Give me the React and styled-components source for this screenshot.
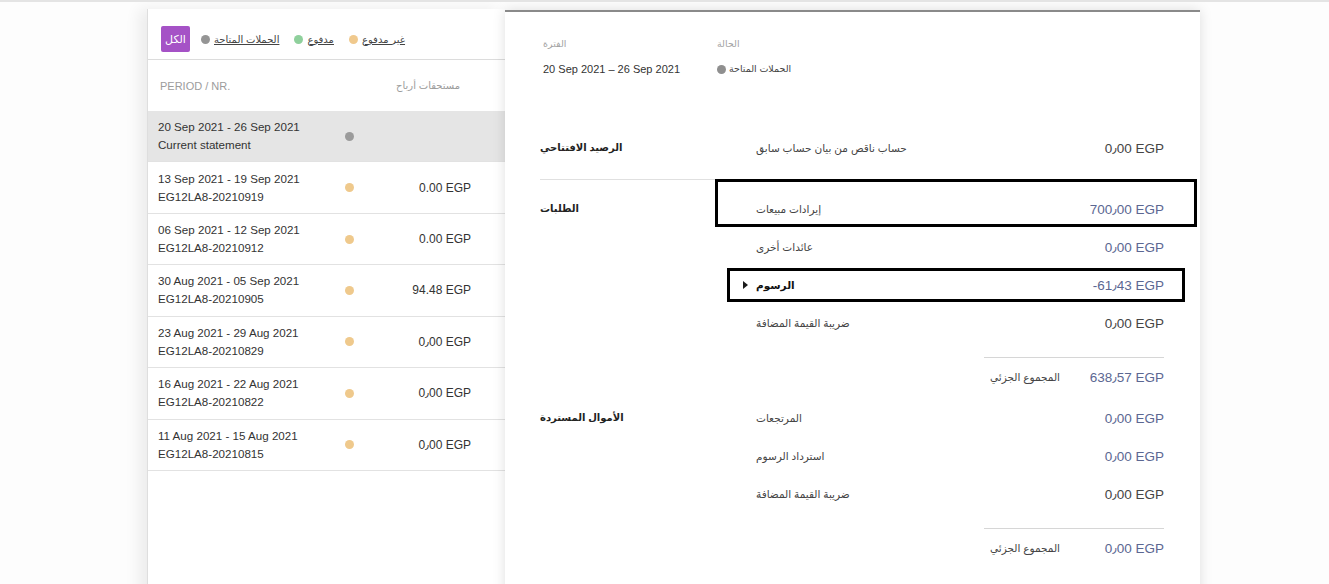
import React from "react";
import styled, { createGlobalStyle } from "styled-components";

const GlobalStyle = createGlobalStyle`
  html, body {
    margin: 0;
    height: 100%;
  }
  body {
    background: #fdfdfd;
    font-family: "Liberation Sans", "DejaVu Sans", Arial, sans-serif;
    color: #333;
    overflow: hidden;
  }
`;

const statements = [
  { period: "20 Sep 2021 - 26 Sep 2021", ref: "Current statement", dot: "#9b9b9b", amount: "", selected: true },
  { period: "13 Sep 2021 - 19 Sep 2021", ref: "EG12LA8-20210919", dot: "#efc98c", amount: "0.00 EGP" },
  { period: "06 Sep 2021 - 12 Sep 2021", ref: "EG12LA8-20210912", dot: "#efc98c", amount: "0.00 EGP" },
  { period: "30 Aug 2021 - 05 Sep 2021", ref: "EG12LA8-20210905", dot: "#efc98c", amount: "94.48 EGP" },
  { period: "23 Aug 2021 - 29 Aug 2021", ref: "EG12LA8-20210829", dot: "#efc98c", amount: "0٫00 EGP" },
  { period: "16 Aug 2021 - 22 Aug 2021", ref: "EG12LA8-20210822", dot: "#efc98c", amount: "0٫00 EGP" },
  { period: "11 Aug 2021 - 15 Aug 2021", ref: "EG12LA8-20210815", dot: "#efc98c", amount: "0٫00 EGP" },
];

export default function App() {
  return (
    <>
      <GlobalStyle />
      <Page>
        <ListPanel>
          <FilterBar>
            <AllButton>الكل</AllButton>
            <LegendItem>
              <Dot $color="#959595" />
              <span>الحملات المتاحة</span>
            </LegendItem>
            <LegendItem>
              <Dot $color="#8fd09c" />
              <span>مدفوع</span>
            </LegendItem>
            <LegendItem>
              <Dot $color="#f0c98d" />
              <span>غير مدفوع</span>
            </LegendItem>
          </FilterBar>

          <ListHeader>
            <span>PERIOD / NR.</span>
            <HeaderArabic>مستحقات أرباح</HeaderArabic>
          </ListHeader>

          {statements.map((s) => (
            <StatementRow key={s.ref} $selected={s.selected}>
              <RowText>
                <div>{s.period}</div>
                <div>{s.ref}</div>
              </RowText>
              <Dot $color={s.dot} />
              <RowAmount>{s.amount}</RowAmount>
            </StatementRow>
          ))}
        </ListPanel>

        <DetailPanel>
          <DetailHeader>
            <Field>
              <FieldLabel>الفترة</FieldLabel>
              <FieldValue>20 Sep 2021 – 26 Sep 2021</FieldValue>
            </Field>
            <Field>
              <FieldLabel>الحالة</FieldLabel>
              <FieldValue>
                <Dot $color="#8f8f8f" />
                <SmallText>الحملات المتاحة</SmallText>
              </FieldValue>
            </Field>
          </DetailHeader>

          <DetailBody>
            <Section>
              <SectionTitle $ruled>الرصيد الافتتاحي</SectionTitle>
              <Lines>
                <Line>
                  <span />
                  <LineLabel>حساب ناقص من بيان حساب سابق</LineLabel>
                  <LineAmount>0٫00 EGP</LineAmount>
                </Line>
              </Lines>
            </Section>

            <Section>
              <SectionTitle>الطلبات</SectionTitle>
              <Lines>
                <Line $mark={{ t: -11, r: -33, b: 1, l: 0 }}>
                  <span />
                  <LineLabel>إيرادات مبيعات</LineLabel>
                  <LineAmount $link>700٫00 EGP</LineAmount>
                </Line>
                <Line>
                  <span />
                  <LineLabel>عائدات أخرى</LineLabel>
                  <LineAmount $link>0٫00 EGP</LineAmount>
                </Line>
                <Line $mark={{ t: 2, r: -21, b: 2, l: 12 }}>
                  <Caret>
                    <svg width="5" height="8" viewBox="0 0 5 8">
                      <polygon points="0,0 5,4 0,8" fill="#1a1a1a" />
                    </svg>
                  </Caret>
                  <LineLabel $strong>الرسوم</LineLabel>
                  <LineAmount $link>-61٫43 EGP</LineAmount>
                </Line>
                <Line>
                  <span />
                  <LineLabel>ضريبة القيمة المضافة</LineLabel>
                  <LineAmount>0٫00 EGP</LineAmount>
                </Line>
                <Subtotal>
                  <LineLabel>المجموع الجزئي</LineLabel>
                  <LineAmount $link>638٫57 EGP</LineAmount>
                </Subtotal>
              </Lines>
            </Section>

            <Section>
              <SectionTitle>الأموال المستردة</SectionTitle>
              <Lines>
                <Line>
                  <span />
                  <LineLabel>المرتجعات</LineLabel>
                  <LineAmount $link>0٫00 EGP</LineAmount>
                </Line>
                <Line>
                  <span />
                  <LineLabel>استرداد الرسوم</LineLabel>
                  <LineAmount $link>0٫00 EGP</LineAmount>
                </Line>
                <Line>
                  <span />
                  <LineLabel>ضريبة القيمة المضافة</LineLabel>
                  <LineAmount>0٫00 EGP</LineAmount>
                </Line>
                <Subtotal>
                  <LineLabel>المجموع الجزئي</LineLabel>
                  <LineAmount $link>0٫00 EGP</LineAmount>
                </Subtotal>
              </Lines>
            </Section>

            <Section>
              <SectionTitle>الرصيد الختامي</SectionTitle>
              <Lines>
                <Line>
                  <span />
                  <LineLabel>الرصيد المستحق</LineLabel>
                  <LineAmount />
                </Line>
              </Lines>
            </Section>
          </DetailBody>
        </DetailPanel>
      </Page>
    </>
  );
}

const Page = styled.div`
  height: 584px;
  box-sizing: border-box;
  border-top: 2px solid #e4e4e4;
  padding: 7px 0 0 147px;
  display: flex;
  align-items: flex-start;
  overflow: hidden;
`;

const ListPanel = styled.div`
  width: 358px;
  height: 640px;
  flex-shrink: 0;
  box-sizing: border-box;
  background: #fff;
  border-left: 1px solid #dedede;
  box-shadow: -8px 0 14px rgba(0, 0, 0, 0.07);
`;

const FilterBar = styled.div`
  display: flex;
  align-items: center;
  padding: 17px 13px 7px;
  border-bottom: 1px solid #dcdcdc;
`;

const AllButton = styled.button`
  width: 29px;
  height: 26px;
  padding: 0;
  border: none;
  border-radius: 2px;
  background: #a552c6;
  color: #fff;
  font-family: inherit;
  font-size: 11px;
  margin-right: 11px;
`;

const LegendItem = styled.a`
  display: inline-flex;
  align-items: center;
  gap: 4px;
  margin-right: 15px;
  font-size: 10px;
  color: #444;
  span {
    text-decoration: underline;
  }
`;

const Dot = styled.span`
  display: inline-block;
  width: 9px;
  height: 9px;
  border-radius: 50%;
  background: ${(p) => p.$color};
  flex-shrink: 0;
`;

const ListHeader = styled.div`
  display: flex;
  justify-content: space-between;
  align-items: center;
  height: 51px;
  padding: 0 45px 0 12px;
  font-size: 11px;
  color: #9c9c9c;
`;

const HeaderArabic = styled.span`
  font-size: 10px;
`;

const StatementRow = styled.div`
  display: grid;
  grid-template-columns: 1fr 10px 117px;
  align-items: center;
  justify-items: center;
  height: 51.43px;
  box-sizing: border-box;
  padding: 0 34px 0 10px;
  border-bottom: 1px solid #e2e2e2;
  background: ${(p) => (p.$selected ? "#e5e5e5" : "#fff")};
`;

const RowText = styled.div`
  justify-self: start;
  font-size: 11.6px;
  line-height: 18px;
  color: #333;
`;

const RowAmount = styled.div`
  justify-self: end;
  font-size: 12px;
  color: #333;
`;

const DetailPanel = styled.div`
  position: relative;
  z-index: 1;
  width: 695px;
  height: 640px;
  flex-shrink: 0;
  margin-top: 1px;
  box-sizing: border-box;
  background: #fff;
  border-top: 2px solid #8a8a8a;
  box-shadow: 0 0 12px rgba(0, 0, 0, 0.13);
`;

const DetailHeader = styled.div`
  display: flex;
  height: 95px;
  box-sizing: border-box;
  padding: 25px 0 0 38px;
`;

const Field = styled.div`
  width: 174px;
  display: flex;
  flex-direction: column;
  gap: 10px;
`;

const FieldLabel = styled.div`
  font-size: 9.5px;
  line-height: 14px;
  color: #a3a3a3;
`;

const FieldValue = styled.div`
  display: flex;
  align-items: center;
  gap: 3px;
  font-size: 11px;
  line-height: 16px;
  color: #333;
`;

const SmallText = styled.span`
  font-size: 9.5px;
  color: #444;
`;

const DetailBody = styled.div`
  padding: 22px 36px 0 35px;
`;

const Section = styled.div`
  display: flex;
  margin-bottom: 4px;
  &:first-child {
    margin-bottom: 10px;
  }
`;

const SectionTitle = styled.div`
  width: 175px;
  flex-shrink: 0;
  font-size: 10px;
  font-weight: bold;
  line-height: 38px;
  color: #222;
  padding-bottom: ${(p) => (p.$ruled ? "12px" : 0)};
  border-bottom: ${(p) => (p.$ruled ? "1px solid #e0e0e0" : "none")};
`;

const Lines = styled.div`
  flex: 1;
  display: flex;
  flex-direction: column;
`;

const Line = styled.div`
  position: relative;
  display: grid;
  grid-template-columns: 41px 1fr auto;
  align-items: center;
  height: 38px;

  ${(p) =>
    p.$mark &&
    `
    &::after {
      content: "";
      position: absolute;
      top: ${p.$mark.t}px;
      right: ${p.$mark.r}px;
      bottom: ${p.$mark.b}px;
      left: ${p.$mark.l}px;
      border: 3px solid #000;
      pointer-events: none;
    }
  `}
`;

const Caret = styled.span`
  display: flex;
  justify-content: flex-end;
  padding-right: 8px;
`;

const LineLabel = styled.span`
  font-size: 10.5px;
  color: ${(p) => (p.$strong ? "#111" : "#444")};
  font-weight: ${(p) => (p.$strong ? "bold" : "normal")};
`;

const LineAmount = styled.span`
  font-size: 13.5px;
  color: ${(p) => (p.$link ? "#5b6792" : "#454545")};
`;

const Subtotal = styled.div`
  align-self: flex-end;
  width: 180px;
  height: 38px;
  margin-top: 15px;
  box-sizing: border-box;
  padding-left: 6px;
  border-top: 1px solid #d6d6d6;
  display: flex;
  justify-content: space-between;
  align-items: center;
`;
